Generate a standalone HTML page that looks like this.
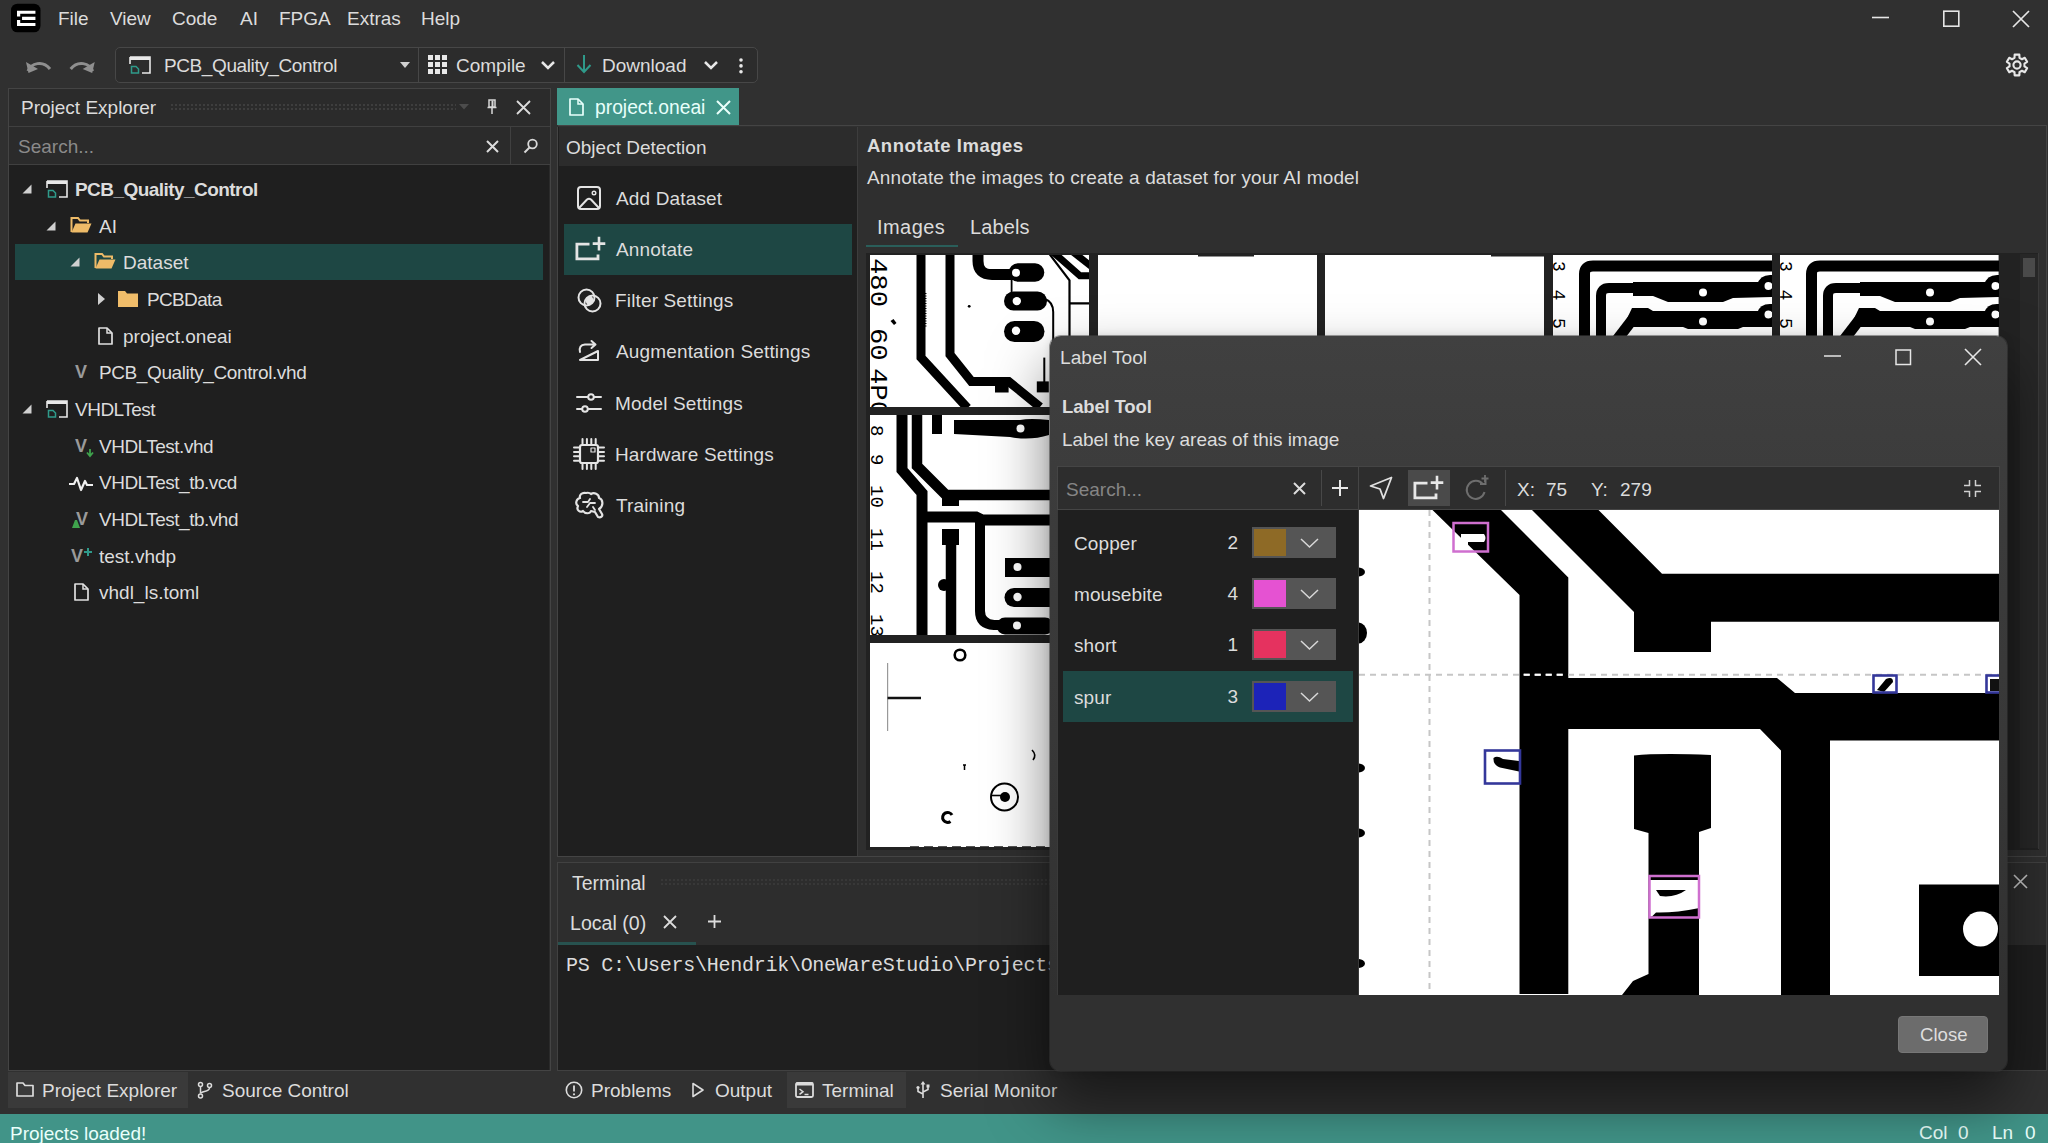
<!DOCTYPE html><html><head><meta charset='utf-8'><title>OneWare Studio</title><style>
*{box-sizing:border-box;margin:0;padding:0}
html,body{width:2048px;height:1143px;overflow:hidden;background:#303030}
body{font-family:"Liberation Sans",sans-serif;font-size:19px;color:#dcdcdc;position:relative}
.a{position:absolute}
.t{position:absolute;white-space:pre;line-height:24px;height:24px}
.b{font-weight:700}
svg{position:absolute;overflow:visible}
.mono{font-family:"Liberation Mono",monospace}
</style></head><body>
<svg style='left:11px;top:3px;' width='29.5' height='30' viewBox='0 0 32 31'><rect x='0' y='0' width='32' height='31' rx='7' fill='#000'/><path d='M6.5 7.5H26.5V11H10V14H6.5Z M12 14.2H26.5V17.6H12Z M6.5 17.8H10V20.8H26.5V24.3H6.5Z' fill='#fff'/></svg>
<div class='t ' style='left:58px;top:6.800000000000001px;'>File</div>
<div class='t ' style='left:110px;top:6.800000000000001px;'>View</div>
<div class='t ' style='left:172px;top:6.800000000000001px;'>Code</div>
<div class='t ' style='left:240px;top:6.800000000000001px;'>AI</div>
<div class='t ' style='left:279px;top:6.800000000000001px;'>FPGA</div>
<div class='t ' style='left:347px;top:6.800000000000001px;'>Extras</div>
<div class='t ' style='left:421px;top:6.800000000000001px;'>Help</div>
<svg style='left:1872px;top:10px;' width='160' height='20' viewBox='0 0 160 20'><path d='M0 7.5H17' stroke='#e6e6e6' stroke-width='1.6'/><rect x='71.8' y='1.2' width='15' height='15' fill='none' stroke='#e6e6e6' stroke-width='1.6'/><path d='M141 1L157 17M157 1L141 17' stroke='#e6e6e6' stroke-width='1.7'/></svg>
<svg style='left:25.3px;top:54px;' width='80' height='22' viewBox='0 0 80 22'><path d='M3 17C6 9 18 6 25 15' fill='none' stroke='#8f8f8f' stroke-width='3'/><path d='M1 8L3.5 19L13 15Z' fill='#8f8f8f'/><g transform='translate(-3.3 0)'><path d='M71 17C68 9 56 6 49 15' fill='none' stroke='#8f8f8f' stroke-width='3'/><path d='M73 8L70.5 19L61 15Z' fill='#8f8f8f'/></g></svg>
<div class='a' style='left:115px;top:47px;width:643px;height:36px;border:1px solid #474747;border-radius:5px;background:#2c2c2c'></div>
<div class='a' style='left:418px;top:48px;width:1px;height:34px;background:#474747;'></div>
<div class='a' style='left:564px;top:48px;width:1px;height:34px;background:#474747;'></div>
<svg style='left:129px;top:56px;' width='22' height='18' viewBox='0 0 22 18'><path d='M1 1H21V17H13' fill='none' stroke='#e8e8e8' stroke-width='1.6'/><path d='M1 1H21V4H1Z' fill='#e8e8e8'/><path d='M1 1V8' stroke='#e8e8e8' stroke-width='1.6'/><path d='M2.5 10.5H7L9.5 13V17H2.5Z' fill='none' stroke='#2f9a8a' stroke-width='1.5'/></svg>
<div class='t ' style='left:164px;top:53.5px;letter-spacing:-0.4px'>PCB_Quality_Control</div>
<svg style='left:399.5px;top:61.8px;' width='10' height='6' viewBox='0 0 10 6'><path d='M0 0H10L5 6Z' fill='#d0d0d0'/></svg>
<svg style='left:428px;top:55px;' width='19' height='19' viewBox='0 0 19 19'><rect x='0' y='0' width='5' height='5' fill='#e8e8e8'/><rect x='0' y='7' width='5' height='5' fill='#e8e8e8'/><rect x='0' y='14' width='5' height='5' fill='#e8e8e8'/><rect x='7' y='0' width='5' height='5' fill='#e8e8e8'/><rect x='7' y='7' width='5' height='5' fill='#e8e8e8'/><rect x='7' y='14' width='5' height='5' fill='#e8e8e8'/><rect x='14' y='0' width='5' height='5' fill='#e8e8e8'/><rect x='14' y='7' width='5' height='5' fill='#e8e8e8'/><rect x='14' y='14' width='5' height='5' fill='#e8e8e8'/></svg>
<div class='t ' style='left:456px;top:53.5px;'>Compile</div>
<svg style='left:541px;top:61.3px;' width='14' height='9' viewBox='0 0 14 9'><path d='M1 1L7 7L13 1' fill='none' stroke='#e8e8e8' stroke-width='2.5'/></svg>
<svg style='left:576px;top:55px;' width='16' height='20' viewBox='0 0 16 20'><path d='M8 0V16M1.5 10L8 17L14.5 10' fill='none' stroke='#2f9a8a' stroke-width='2'/></svg>
<div class='t ' style='left:602px;top:53.5px;'>Download</div>
<svg style='left:704px;top:61.3px;' width='14' height='9' viewBox='0 0 14 9'><path d='M1 1L7 7L13 1' fill='none' stroke='#e8e8e8' stroke-width='2.5'/></svg>
<svg style='left:739.3px;top:57.5px;' width='4' height='16' viewBox='0 0 4 16'><circle cx='2' cy='2' r='1.8' fill='#e8e8e8'/><circle cx='2' cy='7.9' r='1.8' fill='#e8e8e8'/><circle cx='2' cy='13.8' r='1.8' fill='#e8e8e8'/></svg>
<svg style='left:2004.5px;top:52.8px;' width='24' height='24' viewBox='0 0 24 24'><g transform='translate(12 12)' fill='none' stroke='#e8e8e8' stroke-width='2.1' stroke-linejoin='round'><circle r='3.6'/><path d='M-2.38 -10.33L2.38 -10.33L2.47 -7.19L4.99 -5.74L7.75 -7.23L10.14 -3.10L7.46 -1.45L7.46 1.45L10.14 3.10L7.75 7.23L4.99 5.74L2.47 7.19L2.38 10.33L-2.38 10.33L-2.47 7.19L-4.99 5.74L-7.75 7.23L-10.14 3.10L-7.46 1.45L-7.46 -1.45L-10.14 -3.10L-7.75 -7.23L-4.99 -5.74L-2.47 -7.19Z'/></g></svg>
<div class='a' style='left:8px;top:88px;width:543px;height:983px;background:#2b2b2b;border:1px solid #444'></div>
<div class='t ' style='left:21px;top:95.5px;'>Project Explorer</div>
<div class='a' style='left:170px;top:103px;width:286px;height:8px;opacity:.4;background-image:radial-gradient(circle,#5a5a5a 0.9px,transparent 1.2px);background-size:4px 4px'></div>
<svg style='left:458.5px;top:104px;' width='10' height='6' viewBox='0 0 10 6'><path d='M0 0H10L5 5.5Z' fill='#4c4c4c'/></svg>
<svg style='left:487px;top:99px;' width='10' height='16' viewBox='0 0 10 16'><path d='M2 1H8V8H2ZM0.5 8.5H9.5M5 9V15' fill='none' stroke='#d8d8d8' stroke-width='1.5'/><path d='M5.5 1.5V8' stroke='#d8d8d8' stroke-width='2'/></svg>
<svg style='left:516.5px;top:100.5px;' width='13.0' height='13.0' viewBox='0 0 13.0 13.0'><path d='M0 0L13.0 13.0M13.0 0L0 13.0' stroke='#dcdcdc' stroke-width='1.8' fill='none'/></svg>
<div class='a' style='left:9px;top:126px;width:541px;height:1px;background:#404040;'></div>
<div class='a' style='left:9px;top:164px;width:541px;height:1px;background:#404040;'></div>
<div class='a' style='left:510px;top:127px;width:1px;height:37px;background:#404040;'></div>
<div class='t ' style='left:18px;top:134.5px;color:#8a8a8a'>Search...</div>
<svg style='left:486.5px;top:140.5px;' width='11.0' height='11.0' viewBox='0 0 11.0 11.0'><path d='M0 0L11.0 11.0M11.0 0L0 11.0' stroke='#dcdcdc' stroke-width='2' fill='none'/></svg>
<svg style='left:523px;top:138px;' width='16' height='16' viewBox='0 0 16 16'><circle cx='9.5' cy='6' r='4.3' fill='none' stroke='#d8d8d8' stroke-width='1.8'/><path d='M6.5 9.5L1.5 14.5' stroke='#d8d8d8' stroke-width='2'/></svg>
<div class='a' style='left:9px;top:165px;width:540px;height:905px;background:#1f1f1f;'></div>
<div class='a' style='left:15px;top:244px;width:528px;height:36px;background:#1e4744;'></div>
<svg style='left:22px;top:184px;' width='10' height='10' viewBox='0 0 10 10'><path d='M9.5 0.5V9.5H0.5Z' fill='#d0d0d0'/></svg>
<svg style='left:46px;top:180px;' width='22' height='18' viewBox='0 0 22 18'><path d='M1 1H21V17H13' fill='none' stroke='#e8e8e8' stroke-width='1.6'/><path d='M1 1H21V4H1Z' fill='#e8e8e8'/><path d='M1 1V8' stroke='#e8e8e8' stroke-width='1.6'/><path d='M2.5 10.5H7L9.5 13V17H2.5Z' fill='none' stroke='#2f9a8a' stroke-width='1.5'/></svg>
<div class='t b' style='left:75px;top:177.5px;letter-spacing:-0.55px'>PCB_Quality_Control</div>
<svg style='left:46px;top:221px;' width='10' height='10' viewBox='0 0 10 10'><path d='M9.5 0.5V9.5H0.5Z' fill='#d0d0d0'/></svg>
<svg style='left:70px;top:216px;' width='22' height='18' viewBox='0 0 22 18'><path d='M1.5 16V2H8L10 4.5H18V7' fill='none' stroke='#eebb68' stroke-width='2'/><path d='M1.5 16.5L5.5 7.5H21.5L17.5 16.5Z' fill='#eebb68'/></svg>
<div class='t ' style='left:99px;top:214.5px;'>AI</div>
<svg style='left:70px;top:257px;' width='10' height='10' viewBox='0 0 10 10'><path d='M9.5 0.5V9.5H0.5Z' fill='#d0d0d0'/></svg>
<svg style='left:94px;top:252px;' width='22' height='18' viewBox='0 0 22 18'><path d='M1.5 16V2H8L10 4.5H18V7' fill='none' stroke='#eebb68' stroke-width='2'/><path d='M1.5 16.5L5.5 7.5H21.5L17.5 16.5Z' fill='#eebb68'/></svg>
<div class='t ' style='left:123px;top:250.5px;'>Dataset</div>
<svg style='left:98px;top:293px;' width='8' height='12' viewBox='0 0 8 12'><path d='M0 0L7 6L0 12Z' fill='#d0d0d0'/></svg>
<svg style='left:118px;top:290px;' width='20' height='17' viewBox='0 0 20 17'><path d='M0 1H7L9 3.5H20V17H0Z' fill='#f0bd6a'/></svg>
<div class='t ' style='left:147px;top:287.5px;letter-spacing:-0.65px'>PCBData</div>
<svg style='left:98px;top:327px;' width='15' height='18' viewBox='0 0 15 18'><path d='M1 1H9L14 6V17H1Z' fill='none' stroke='#e0e0e0' stroke-width='1.7' stroke-linejoin='round'/><path d='M9 1V6H14' fill='none' stroke='#e0e0e0' stroke-width='1.5'/></svg>
<div class='t ' style='left:123px;top:324.5px;'>project.oneai</div>
<div class='t b' style='left:75px;top:360px;color:#9a9a9a;font-size:18px'>V</div>
<div class='t ' style='left:99px;top:360.5px;letter-spacing:-0.4px'>PCB_Quality_Control.vhd</div>
<svg style='left:22px;top:404px;' width='10' height='10' viewBox='0 0 10 10'><path d='M9.5 0.5V9.5H0.5Z' fill='#d0d0d0'/></svg>
<svg style='left:46px;top:400px;' width='22' height='18' viewBox='0 0 22 18'><path d='M1 1H21V17H13' fill='none' stroke='#e8e8e8' stroke-width='1.6'/><path d='M1 1H21V4H1Z' fill='#e8e8e8'/><path d='M1 1V8' stroke='#e8e8e8' stroke-width='1.6'/><path d='M2.5 10.5H7L9.5 13V17H2.5Z' fill='none' stroke='#2f9a8a' stroke-width='1.5'/></svg>
<div class='t ' style='left:75px;top:397.5px;letter-spacing:-0.5px'>VHDLTest</div>
<div class='t b' style='left:75px;top:434px;color:#9a9a9a;font-size:18px'>V</div>
<svg style='left:86px;top:449px;' width='8' height='8' viewBox='0 0 8 8'><path d='M4 0V6M1 3.5L4 7L7 3.5' stroke='#3fa34d' stroke-width='1.8' fill='none'/></svg>
<div class='t ' style='left:99px;top:434.5px;letter-spacing:-0.5px'>VHDLTest.vhd</div>
<svg style='left:68px;top:474px;' width='26' height='18' viewBox='0 0 26 18'><path d='M1 10H6L9 4L13 16L17 7L19 11H25' fill='none' stroke='#f0f0f0' stroke-width='2.2' stroke-linejoin='round'/></svg>
<div class='t ' style='left:99px;top:470.5px;letter-spacing:-0.5px'>VHDLTest_tb.vcd</div>
<div class='t b' style='left:76px;top:507px;color:#9a9a9a;font-size:18px'>V</div>
<svg style='left:70px;top:519px;' width='12' height='10' viewBox='0 0 12 10'><path d='M2 9L5 1H7L10 9Z' fill='#3fa34d'/></svg>
<div class='t ' style='left:99px;top:507.5px;letter-spacing:-0.5px'>VHDLTest_tb.vhd</div>
<div class='t b' style='left:71px;top:544px;color:#9a9a9a;font-size:18px'>V</div>
<svg style='left:84px;top:548px;' width='8' height='8' viewBox='0 0 8 8'><path d='M4 0V8M0 4H8' stroke='#2f9a8a' stroke-width='2'/></svg>
<div class='t ' style='left:99px;top:544.5px;'>test.vhdp</div>
<svg style='left:74px;top:583px;' width='15' height='18' viewBox='0 0 15 18'><path d='M1 1H9L14 6V17H1Z' fill='none' stroke='#e0e0e0' stroke-width='1.7' stroke-linejoin='round'/><path d='M9 1V6H14' fill='none' stroke='#e0e0e0' stroke-width='1.5'/></svg>
<div class='t ' style='left:99px;top:580.5px;'>vhdl_ls.toml</div>
<div class='a' style='left:8px;top:1072px;width:180px;height:36px;background:#3a3a3a;'></div>
<svg style='left:16px;top:1081px;' width='18' height='16' viewBox='0 0 18 16'><path d='M1 2H7L9 4.5H17V15H1Z' fill='none' stroke='#dcdcdc' stroke-width='1.7' stroke-linejoin='round'/></svg>
<div class='t ' style='left:42px;top:1078.5px;'>Project Explorer</div>
<svg style='left:197px;top:1081px;' width='16' height='19' viewBox='0 0 16 19'><circle cx='3.5' cy='3.5' r='2' fill='none' stroke='#dcdcdc' stroke-width='1.5'/><circle cx='3.5' cy='15' r='2' fill='none' stroke='#dcdcdc' stroke-width='1.5'/><circle cx='12.5' cy='4.5' r='2' fill='none' stroke='#dcdcdc' stroke-width='1.5'/><path d='M3.5 6V12.5M12.5 7C12.5 11 4 10 3.7 12.5' fill='none' stroke='#dcdcdc' stroke-width='1.5'/></svg>
<div class='t ' style='left:222px;top:1078.5px;'>Source Control</div>
<div class='a' style='left:0px;top:1114px;width:2048px;height:29px;background:#419488;'></div>
<div class='t ' style='left:10px;top:1121.5px;color:#e9fffb'>Projects loaded!</div>
<div class='t ' style='left:1919px;top:1120.5px;color:#e9fffb'>Col</div>
<div class='t ' style='left:1958px;top:1120.5px;color:#e9fffb'>0</div>
<div class='t ' style='left:1992px;top:1120.5px;color:#e9fffb'>Ln</div>
<div class='t ' style='left:2025px;top:1120.5px;color:#e9fffb'>0</div>
<div class='a' style='left:557px;top:87.6px;width:182px;height:37.4px;background:#419689;'></div>
<svg style='left:569px;top:98px;' width='15' height='18' viewBox='0 0 15 18'><path d='M1 1H9L14 6V17H1Z' fill='none' stroke='#e8fffb' stroke-width='1.7' stroke-linejoin='round'/><path d='M9 1V6H14' fill='none' stroke='#e8fffb' stroke-width='1.5'/></svg>
<div class='t ' style='left:595px;top:95.5px;color:#e8fffb;font-size:19.3px'>project.oneai</div>
<svg style='left:716.5px;top:100.5px;' width='13.0' height='13.0' viewBox='0 0 13.0 13.0'><path d='M0 0L13.0 13.0M13.0 0L0 13.0' stroke='#eafffb' stroke-width='2' fill='none'/></svg>
<div class='a' style='left:558px;top:125px;width:1489px;height:1px;background:#444;'></div>
<div class='a' style='left:557px;top:127px;width:301px;height:729.5px;background:#1f1f1f;border-left:1px solid #444;border-bottom:1px solid #444'></div>
<div class='a' style='left:559px;top:127px;width:298px;height:39px;background:#2c2c2c;'></div>
<div class='t ' style='left:566px;top:135.5px;'>Object Detection</div>
<div class='a' style='left:857px;top:127px;width:1px;height:729px;background:#3d3d3d;'></div>
<div class='a' style='left:564px;top:224px;width:288px;height:51px;background:#1e4744;'></div>
<div class='t ' style='left:616px;top:186.5px;letter-spacing:0.15px'>Add Dataset</div>
<div class='t ' style='left:616px;top:237.5px;letter-spacing:0.15px'>Annotate</div>
<div class='t ' style='left:615px;top:288.5px;letter-spacing:0.15px'>Filter Settings</div>
<div class='t ' style='left:616px;top:339.5px;letter-spacing:0.15px'>Augmentation Settings</div>
<div class='t ' style='left:615px;top:391.5px;letter-spacing:0.15px'>Model Settings</div>
<div class='t ' style='left:615px;top:442.5px;letter-spacing:0.15px'>Hardware Settings</div>
<div class='t ' style='left:616px;top:493.5px;letter-spacing:0.15px'>Training</div>
<svg style='left:577px;top:186px;' width='24' height='24' viewBox='0 0 24 24'><g stroke-width='2'><rect x='1' y='1' width='22' height='22' rx='3' fill='none' stroke='#e4e4e4' stroke-linejoin='round' stroke-linecap='round'/><circle cx='17' cy='7' r='1.8' fill='none' stroke='#e4e4e4' stroke-linejoin='round' stroke-linecap='round' stroke-width='1.4'/><path d='M2.5 21.5L10 13.5Q12 12 14 13.5L21.5 21.5' fill='none' stroke='#e4e4e4' stroke-linejoin='round' stroke-linecap='round'/></g></svg>
<svg style='left:574px;top:236px;' width='32' height='28' viewBox='0 0 32 28'><path d='M15.5 8.2H2.9V22.8H24V18.5' fill='none' stroke='#e4e4e4' stroke-width='2.8'/><path d='M25 0.8V14.4M18.7 7.6H31.3' fill='none' stroke='#e4e4e4' stroke-width='2.6'/></svg>
<svg style='left:577px;top:288px;' width='26' height='26' viewBox='0 0 26 26'><g stroke-width='2'><circle cx='9.5' cy='9.5' r='8' fill='none' stroke='#e4e4e4' stroke-linejoin='round' stroke-linecap='round'/><circle cx='15.5' cy='15.5' r='8' fill='none' stroke='#e4e4e4' stroke-linejoin='round' stroke-linecap='round'/><path d='M8.5 13A8 8 0 0 1 14 7.6A8 8 0 0 1 16.5 12A8 8 0 0 1 11 17.4A8 8 0 0 1 8.5 13Z' fill='#e4e4e4'/></g></svg>
<svg style='left:577px;top:339px;' width='24' height='24' viewBox='0 0 24 24'><g stroke-width='2'><path d='M3 21L21 12V21Z' fill='none' stroke='#e4e4e4' stroke-linejoin='round' stroke-linecap='round'/><path d='M3 13Q1.5 6 8 5.5H18M14.5 2L18.5 5.5L14.5 9' fill='none' stroke='#e4e4e4' stroke-linejoin='round' stroke-linecap='round'/></g></svg>
<svg style='left:576px;top:391px;' width='26' height='24' viewBox='0 0 26 24'><g stroke-width='2'><path d='M1 6H12M18 6H25M1 18H6M12 18H25' fill='none' stroke='#e4e4e4' stroke-linejoin='round' stroke-linecap='round'/><circle cx='15' cy='6' r='2.8' fill='none' stroke='#e4e4e4' stroke-linejoin='round' stroke-linecap='round'/><circle cx='9' cy='18' r='2.8' fill='none' stroke='#e4e4e4' stroke-linejoin='round' stroke-linecap='round'/></g></svg>
<svg style='left:573px;top:438px;' width='32' height='32' viewBox='0 0 32 32'><g stroke-width='2'><rect x='7' y='7' width='18' height='18' rx='2' fill='none' stroke='#e4e4e4' stroke-linejoin='round' stroke-linecap='round' stroke-width='2.2'/><rect x='18' y='10' width='4' height='4' fill='none' stroke='#e4e4e4' stroke-linejoin='round' stroke-linecap='round' stroke-width='1.2'/><path d='M9.5 1V6M9.5 26V31M1 9.5H6M26 9.5H31' fill='none' stroke='#e4e4e4' stroke-linejoin='round' stroke-linecap='round' stroke-width='2'/><path d='M13.9 1V6M13.9 26V31M1 13.9H6M26 13.9H31' fill='none' stroke='#e4e4e4' stroke-linejoin='round' stroke-linecap='round' stroke-width='2'/><path d='M18.3 1V6M18.3 26V31M1 18.3H6M26 18.3H31' fill='none' stroke='#e4e4e4' stroke-linejoin='round' stroke-linecap='round' stroke-width='2'/><path d='M22.700000000000003 1V6M22.700000000000003 26V31M1 22.700000000000003H6M26 22.700000000000003H31' fill='none' stroke='#e4e4e4' stroke-linejoin='round' stroke-linecap='round' stroke-width='2'/></g></svg>
<svg style='left:574px;top:490px;' width='32' height='32' viewBox='0 0 32 32'><g stroke-width='2'><path d='M12 3C8 2 5 5 6 8C2 9 1 14 4 16C2 20 6 23 9 21C11 24 16 24 17 21L21 22L24 27C27 28 29 26 28 24L25 19C30 16 29 9 25 8C25 4 20 2 17 4C16 3 14 2.5 12 3Z' fill='none' stroke='#e4e4e4' stroke-linejoin='round' stroke-linecap='round' stroke-width='2.2'/><path d='M9 12H14L16 9M13 17L16 13H21M19 17L21 20' fill='none' stroke='#e4e4e4' stroke-linejoin='round' stroke-linecap='round' stroke-width='1.8'/></g></svg>
<div class='a' style='left:858px;top:126px;width:1189px;height:730.5px;background:#2f2f2f;border-bottom:1px solid #444'></div>
<div class='a' style='left:2046px;top:126px;width:1px;height:730px;background:#444;'></div>
<div class='t b' style='left:867px;top:133.5px;font-size:18.5px;letter-spacing:0.5px'>Annotate Images</div>
<div class='t ' style='left:867px;top:165.5px;letter-spacing:0.11px'>Annotate the images to create a dataset for your AI model</div>
<div class='t ' style='left:877px;top:214.5px;font-size:20px;letter-spacing:0.45px'>Images</div>
<div class='t ' style='left:970px;top:214.5px;font-size:20px;letter-spacing:0.1px'>Labels</div>
<div class='a' style='left:866px;top:244.5px;width:92px;height:2.5px;background:#2a5e5a;'></div>
<div class='a' style='left:557px;top:862px;width:1490px;height:209px;background:#2d2d2d;border:1px solid #414141'></div>
<div class='t ' style='left:572px;top:870.5px;font-size:19.5px'>Terminal</div>
<div class='a' style='left:660px;top:878px;width:1340px;height:8px;opacity:.25;background-image:radial-gradient(circle,#5a5a5a 0.9px,transparent 1.2px);background-size:4px 4px'></div>
<svg style='left:2013.5px;top:874.5px;' width='13.0' height='13.0' viewBox='0 0 13.0 13.0'><path d='M0 0L13.0 13.0M13.0 0L0 13.0' stroke='#c8c8c8' stroke-width='1.6' fill='none'/></svg>
<div class='t ' style='left:570px;top:910.5px;font-size:19.6px'>Local (0)</div>
<svg style='left:664px;top:916px;' width='12' height='12' viewBox='0 0 12 12'><path d='M0 0L12 12M12 0L0 12' stroke='#dcdcdc' stroke-width='1.8' fill='none'/></svg>
<svg style='left:708px;top:915px;' width='13' height='13' viewBox='0 0 13 13'><path d='M6.5 0V13M0 6.5H13' stroke='#dcdcdc' stroke-width='1.8'/></svg>
<div class='a' style='left:558px;top:942px;width:138px;height:3px;background:#27524f;'></div>
<div class='a' style='left:558px;top:945px;width:1488px;height:125px;background:#1f1f1f;'></div>
<div class='t mono' style='left:566px;top:953.5px;font-size:20px;letter-spacing:-0.27px'>PS C:\Users\Hendrik\OneWareStudio\Projects</div>
<div class='a' style='left:787px;top:1072px;width:119px;height:36px;background:#3a3a3a;'></div>
<svg style='left:565px;top:1081px;' width='18' height='18' viewBox='0 0 18 18'><circle cx='9' cy='9' r='7.7' fill='none' stroke='#dcdcdc' stroke-width='1.6'/><path d='M9 4.5V10.5' stroke='#dcdcdc' stroke-width='1.8'/><circle cx='9' cy='13.3' r='1.1' fill='#dcdcdc'/></svg>
<div class='t ' style='left:591px;top:1078.5px;'>Problems</div>
<svg style='left:692px;top:1082px;' width='12' height='16' viewBox='0 0 12 16'><path d='M1 1.5L11 8L1 14.5Z' fill='none' stroke='#dcdcdc' stroke-width='1.6' stroke-linejoin='round'/></svg>
<div class='t ' style='left:715px;top:1078.5px;'>Output</div>
<svg style='left:795px;top:1082px;' width='19' height='16' viewBox='0 0 19 16'><rect x='1' y='1' width='17' height='14' rx='1.5' fill='none' stroke='#dcdcdc' stroke-width='1.8'/><path d='M1 2H18' stroke='#dcdcdc' stroke-width='3'/><path d='M4.5 7L8 9.7L4.5 12.3M9.5 12.5H13.5' fill='none' stroke='#dcdcdc' stroke-width='1.5'/></svg>
<div class='t ' style='left:822px;top:1078.5px;'>Terminal</div>
<svg style='left:915px;top:1081px;' width='16' height='18' viewBox='0 0 16 18'><path d='M8 2V17M8 13L3 10.5V7.5M8 11L13 8.5V6' fill='none' stroke='#dcdcdc' stroke-width='1.6'/><path d='M8 0L10.5 3.5H5.5Z' fill='#dcdcdc'/><circle cx='3' cy='6.5' r='1.6' fill='#dcdcdc'/><rect x='11.5' y='3.5' width='3' height='3' fill='#dcdcdc'/></svg>
<div class='t ' style='left:940px;top:1078.5px;'>Serial Monitor</div>
<div class='a' style='left:866px;top:253px;width:1173px;height:597px;background:#222;'></div>
<div class='a' style='left:2038px;top:253px;width:1px;height:596px;background:#3a3a3a;'></div>
<div class='a' style='left:2020px;top:254px;width:18px;height:594px;background:#272727;'></div>
<div class='a' style='left:2022.5px;top:258px;width:12.5px;height:19px;background:#4a4a4a;'></div>
<svg style='left:870px;top:254.5px;overflow:hidden' width='219' height='152.5' viewBox='0 0 219 152.5'><rect width='219' height='152.5' fill='#fff'/><text transform='translate(0.5 3) rotate(90) scale(1.16 1)' font-family='Liberation Mono, monospace' font-size='23.5' fill='#000' >480</text><text transform='translate(0.5 73) rotate(90) scale(1.16 1)' font-family='Liberation Mono, monospace' font-size='23.5' fill='#000' >60</text><text transform='translate(0.5 113) rotate(90) scale(1.16 1)' font-family='Liberation Mono, monospace' font-size='23.5' fill='#000' >4P0</text><path d='M51 -2V102.6L97.5 153' fill='none' stroke='#000' stroke-width='9'/><path d='M80 -2V99.6L101.4 126.4H138.6L170 152' fill='none' stroke='#000' stroke-width='9'/><rect x='125' y='128' width='13.6' height='9.5' fill='#000'/><path d='M108 -2V6Q108 19.5 122 19.5H160' fill='none' stroke='#000' stroke-width='11'/><path d='M148 17.5H165' fill='none' stroke='#000' stroke-width='18.6' stroke-linecap='round'/><circle cx='146' cy='17.8' r='4' fill='#fff'/><path d='M143.5 46H167.5' fill='none' stroke='#000' stroke-width='19' stroke-linecap='round'/><circle cx='146.8' cy='46.1' r='4.2' fill='#fff'/><path d='M144.5 76.5H164' fill='none' stroke='#000' stroke-width='21' stroke-linecap='round'/><circle cx='146' cy='75.8' r='4.2' fill='#fff'/><path d='M141.6 25V38' fill='none' stroke='#000' stroke-width='1.8'/><path d='M175 44Q183.2 47 183.2 57V96' fill='none' stroke='#000' stroke-width='2'/><path d='M174.3 102.6V127' fill='none' stroke='#000' stroke-width='2'/><rect x='166.8' y='126.4' width='12' height='11' fill='#000'/><path d='M178.7 -2L199.5 25.3V86M199.5 48.3H219' fill='none' stroke='#000' stroke-width='2.2'/><path d='M183 -3L210 20.8H222' fill='none' stroke='#000' stroke-width='7'/><path d='M203 -3L222 12' fill='none' stroke='#000' stroke-width='7'/><path d='M20.5 66L23.5 64L26.5 68L24 70Z' fill='#000'/><circle cx='99.2' cy='51.3' r='1.4' fill='#000'/><path d='M55.5 38V72' stroke='#000' stroke-width='2' stroke-dasharray='1 1.5'/></svg>
<svg style='left:1097.6px;top:254.5px;overflow:hidden' width='219' height='152.5' viewBox='0 0 219 152.5'><rect width='219' height='152.5' fill='#fff'/><path d='M100 0.5H156' stroke='#222' stroke-width='2'/></svg>
<svg style='left:1325.2px;top:254.5px;overflow:hidden' width='219' height='152.5' viewBox='0 0 219 152.5'><rect width='219' height='152.5' fill='#fff'/><path d='M166 0.5H219' stroke='#222' stroke-width='2'/></svg>
<svg style='left:1552.8px;top:254.5px;overflow:hidden' width='219' height='152.5' viewBox='0 0 219 152.5'><rect width='219' height='152.5' fill='#fff'/><text transform='translate(0 6) rotate(90) scale(1 1)' font-family='Liberation Mono, monospace' font-size='18' fill='#000' >3</text><text transform='translate(0 34.5) rotate(90) scale(1 1)' font-family='Liberation Mono, monospace' font-size='18' fill='#000' >4</text><text transform='translate(0 63) rotate(90) scale(1 1)' font-family='Liberation Mono, monospace' font-size='18' fill='#000' >5</text><path d='M31.5 90V19Q31.5 11 40 11H222' fill='none' stroke='#000' stroke-width='11'/><path d='M48 90V41Q48 33 56 33H90' fill='none' stroke='#000' stroke-width='10'/><path d='M80 27H219V42L180 43L170 47H115L100 41H80Z' fill='#000'/><path d='M204 30Q207 19 219 20V40H204Z' fill='#000'/><circle cx='150' cy='37.5' r='4' fill='#fff'/><circle cx='215.5' cy='31' r='4' fill='#fff'/><path d='M60 90L83 60' fill='none' stroke='#000' stroke-width='11'/><path d='M79 53H95L100 56H219V72H190L185 74H135L130 72H70Z' fill='#000'/><path d='M204 58Q207 48 219 49V68H204Z' fill='#000'/><circle cx='150' cy='66.5' r='4' fill='#fff'/><circle cx='215.5' cy='59.5' r='4' fill='#fff'/></svg>
<svg style='left:1780.4px;top:254.5px;overflow:hidden' width='218.6' height='152.5' viewBox='0 0 218.6 152.5'><rect width='218.6' height='152.5' fill='#fff'/><text transform='translate(0 6) rotate(90) scale(1 1)' font-family='Liberation Mono, monospace' font-size='18' fill='#000' >3</text><text transform='translate(0 34.5) rotate(90) scale(1 1)' font-family='Liberation Mono, monospace' font-size='18' fill='#000' >4</text><text transform='translate(0 63) rotate(90) scale(1 1)' font-family='Liberation Mono, monospace' font-size='18' fill='#000' >5</text><path d='M31.5 90V19Q31.5 11 40 11H222' fill='none' stroke='#000' stroke-width='11'/><path d='M48 90V41Q48 33 56 33H90' fill='none' stroke='#000' stroke-width='10'/><path d='M80 27H219V42L180 43L170 47H115L100 41H80Z' fill='#000'/><path d='M204 30Q207 19 219 20V40H204Z' fill='#000'/><circle cx='150' cy='37.5' r='4' fill='#fff'/><circle cx='215.5' cy='31' r='4' fill='#fff'/><path d='M60 90L83 60' fill='none' stroke='#000' stroke-width='11'/><path d='M79 53H95L100 56H219V72H190L185 74H135L130 72H70Z' fill='#000'/><path d='M204 58Q207 48 219 49V68H204Z' fill='#000'/><circle cx='150' cy='66.5' r='4' fill='#fff'/><circle cx='215.5' cy='59.5' r='4' fill='#fff'/></svg>
<svg style='left:870px;top:415px;overflow:hidden' width='219' height='220' viewBox='0 0 219 220'><rect width='219' height='220' fill='#fff'/><text transform='translate(1 10) rotate(90) scale(1 1)' font-family='Liberation Mono, monospace' font-size='19' fill='#000' >8</text><text transform='translate(1 39) rotate(90) scale(1 1)' font-family='Liberation Mono, monospace' font-size='19' fill='#000' >9</text><text transform='translate(1 70) rotate(90) scale(1 1)' font-family='Liberation Mono, monospace' font-size='19' fill='#000' >10</text><text transform='translate(1 113) rotate(90) scale(1 1)' font-family='Liberation Mono, monospace' font-size='19' fill='#000' >11</text><text transform='translate(1 156) rotate(90) scale(1 1)' font-family='Liberation Mono, monospace' font-size='19' fill='#000' >12</text><text transform='translate(1 199) rotate(90) scale(1 1)' font-family='Liberation Mono, monospace' font-size='19' fill='#000' >13</text><path d='M32 -2V55L52 78V222' fill='none' stroke='#000' stroke-width='11'/><path d='M47 -2V51L76 80H222' fill='none' stroke='#000' stroke-width='10.5'/><rect x='72' y='80' width='17' height='11' fill='#000'/><rect x='62' y='0' width='10' height='19' fill='#000'/><path d='M84 5H150Q160 3 179 5V20Q160 26 140 22L84 19Z' fill='#000'/><circle cx='150.5' cy='13.5' r='4' fill='#fff'/><path d='M52 102H106L112 105H222' fill='none' stroke='#000' stroke-width='11'/><path d='M110 105V196Q110 209 124 210H222' fill='none' stroke='#000' stroke-width='10'/><path d='M135 211H175' fill='none' stroke='#000' stroke-width='17' stroke-linecap='round'/><circle cx='147' cy='210.5' r='4' fill='#fff'/><rect x='72' y='114' width='17' height='16' fill='#000'/><path d='M81 128V222' fill='none' stroke='#000' stroke-width='10.5'/><circle cx='74' cy='170' r='6' fill='#000'/><rect x='135' y='143' width='60' height='19' fill='#000'/><circle cx='147.5' cy='152' r='4' fill='#fff'/><path d='M144 182.5H190' fill='none' stroke='#000' stroke-width='19' stroke-linecap='round'/><circle cx='147.5' cy='182' r='4.2' fill='#fff'/></svg>
<svg style='left:870px;top:643px;overflow:hidden' width='219' height='204' viewBox='0 0 219 204'><rect width='219' height='204' fill='#fff'/><circle cx='90' cy='12' r='5.3' fill='none' stroke='#000' stroke-width='2.6'/><path d='M17.6 20V88' stroke='#999' stroke-width='1.2'/><path d='M17.6 55H51' stroke='#111' stroke-width='2.4'/><path d='M93 122H96M94.5 122V127' stroke='#000' stroke-width='1.5'/><path d='M162 107Q167 112 163 117' fill='none' stroke='#000' stroke-width='1.6'/><circle cx='134.5' cy='154' r='13.5' fill='none' stroke='#000' stroke-width='2'/><circle cx='135' cy='154' r='5' fill='#000'/><path d='M121 152.5H135' fill='none' stroke='#000' stroke-width='1.6'/><path d='M80.5 178.5A5 5 0 1 1 82 172' fill='none' stroke='#000' stroke-width='3'/><path d='M40 203.5H219' stroke='#555' stroke-width='1' stroke-dasharray='9 5'/></svg>
<div class='a' style='left:1050px;top:336px;width:957px;height:734.5px;border-radius:11px;background:linear-gradient(#404040 0px,#3c3c3c 130px,#383838 400px,#303030 660px);box-shadow:0 30px 60px rgba(0,0,0,.52),0 0 8px rgba(0,0,0,.12),0 0 0 1px rgba(80,80,80,.5)'></div>
<div class='t ' style='left:1060px;top:346.0px;font-size:19.2px'>Label Tool</div>
<svg style='left:1824px;top:348px;' width='160' height='20' viewBox='0 0 160 20'><path d='M0 8H17' stroke='#e6e6e6' stroke-width='1.5'/><rect x='72' y='2' width='14.5' height='14.5' fill='none' stroke='#e6e6e6' stroke-width='1.5'/><path d='M141 1L157 17M157 1L141 17' stroke='#e6e6e6' stroke-width='1.6'/></svg>
<div class='t b' style='left:1062px;top:394.5px;font-size:18.5px;letter-spacing:-0.15px'>Label Tool</div>
<div class='t ' style='left:1062px;top:427.5px;letter-spacing:-0.05px'>Label the key areas of this image</div>
<div class='a' style='left:1057px;top:466px;width:943px;height:44px;background:#2d2d2d;border:1px solid #454545'></div>
<div class='a' style='left:1321px;top:470px;width:1px;height:36px;background:#484848;'></div>
<div class='a' style='left:1358px;top:467px;width:1px;height:42px;background:#454545;'></div>
<div class='a' style='left:1504.5px;top:470px;width:1px;height:36px;background:#484848;'></div>
<div class='t ' style='left:1066px;top:477.5px;color:#858585'>Search...</div>
<svg style='left:1293.5px;top:482.5px;' width='11.0' height='11.0' viewBox='0 0 11.0 11.0'><path d='M0 0L11.0 11.0M11.0 0L0 11.0' stroke='#dcdcdc' stroke-width='2' fill='none'/></svg>
<svg style='left:1332px;top:480px;' width='16' height='16' viewBox='0 0 16 16'><path d='M8 0V16M0 8H16' stroke='#e8e8e8' stroke-width='2'/></svg>
<svg style='left:1369px;top:476px;' width='24' height='24' viewBox='0 0 24 24'><path d='M22.5 1.5L1.5 10L11 13L14.5 22.5Z' fill='none' stroke='#e0e0e0' stroke-width='1.8' stroke-linejoin='round'/></svg>
<div class='a' style='left:1408px;top:470px;width:42px;height:36px;background:#4a4a4a;'></div>
<svg style='left:1412px;top:475px;' width='34' height='28' viewBox='0 0 34 28'><path d='M15.5 8.2H2.9V22.8H24V18.5' fill='none' stroke='#e8e8e8' stroke-width='2.8'/><path d='M25 0.8V14.4M18.7 7.6H31.3' fill='none' stroke='#e8e8e8' stroke-width='2.6'/></svg>
<svg style='left:1463px;top:475px;' width='28' height='26' viewBox='0 0 28 26'><path d='M20 9.5A9 9 0 1 0 21.5 17' fill='none' stroke='#6e6e6e' stroke-width='2'/><path d='M17 9H22.5V3.5' fill='none' stroke='#6e6e6e' stroke-width='2'/><path d='M22 0V7M18.5 3.5H25.5' stroke='#6e6e6e' stroke-width='1.8'/></svg>
<div class='t ' style='left:1517px;top:477.5px;'>X:</div>
<div class='t ' style='left:1546px;top:477.5px;'>75</div>
<div class='t ' style='left:1591px;top:477.5px;'>Y:</div>
<div class='t ' style='left:1620px;top:477.5px;'>279</div>
<svg style='left:1964px;top:480px;' width='17' height='17' viewBox='0 0 17 17'><path d='M5.5 0V5.5H0M11.5 0V5.5H17M5.5 17V11.5H0M11.5 17V11.5H17' fill='none' stroke='#d0d0d0' stroke-width='1.5'/></svg>
<div class='a' style='left:1057px;top:510px;width:302px;height:485px;background:#1f1f1f;border-left:1px solid #3a3a3a;border-right:1px solid #3a3a3a'></div>
<div class='a' style='left:1063px;top:671px;width:290px;height:51px;background:#1e4744;'></div>
<div class='t ' style='left:1074px;top:531.5px;letter-spacing:0.1px'>Copper</div>
<div class='t' style='left:1200px;width:38px;text-align:right;top:531px'>2</div>
<div class='a' style='left:1252px;top:527px;width:84px;height:31px;background:#555555;'></div>
<div class='a' style='left:1254px;top:529px;width:32px;height:27px;background:#8e6a26;'></div>
<svg style='left:1300px;top:538px;' width='19' height='10' viewBox='0 0 19 10'><path d='M1 1L9.5 9L18 1' fill='none' stroke='#d8d8d8' stroke-width='1.5'/></svg>
<div class='t ' style='left:1074px;top:582.5px;letter-spacing:0.1px'>mousebite</div>
<div class='t' style='left:1200px;width:38px;text-align:right;top:582px'>4</div>
<div class='a' style='left:1252px;top:578px;width:84px;height:31px;background:#555555;'></div>
<div class='a' style='left:1254px;top:580px;width:32px;height:27px;background:#e552d2;'></div>
<svg style='left:1300px;top:589px;' width='19' height='10' viewBox='0 0 19 10'><path d='M1 1L9.5 9L18 1' fill='none' stroke='#d8d8d8' stroke-width='1.5'/></svg>
<div class='t ' style='left:1074px;top:633.5px;letter-spacing:0.1px'>short</div>
<div class='t' style='left:1200px;width:38px;text-align:right;top:633px'>1</div>
<div class='a' style='left:1252px;top:629px;width:84px;height:31px;background:#555555;'></div>
<div class='a' style='left:1254px;top:631px;width:32px;height:27px;background:#e5325f;'></div>
<svg style='left:1300px;top:640px;' width='19' height='10' viewBox='0 0 19 10'><path d='M1 1L9.5 9L18 1' fill='none' stroke='#d8d8d8' stroke-width='1.5'/></svg>
<div class='t ' style='left:1074px;top:685.5px;letter-spacing:0.1px'>spur</div>
<div class='t' style='left:1200px;width:38px;text-align:right;top:685px'>3</div>
<div class='a' style='left:1252px;top:681px;width:84px;height:31px;background:#555555;'></div>
<div class='a' style='left:1254px;top:683px;width:32px;height:27px;background:#1c23b8;'></div>
<svg style='left:1300px;top:692px;' width='19' height='10' viewBox='0 0 19 10'><path d='M1 1L9.5 9L18 1' fill='none' stroke='#d8d8d8' stroke-width='1.5'/></svg>
<svg style='left:1359px;top:510px;overflow:hidden' width='640' height='484.5' viewBox='0 0 640 484.5'><rect width='640' height='485' fill='#fff'/><path d='M73.5 0.0L160.5 85.0V484H209.29999999999995V67.5L142.0 0.0Z' fill='#000'/><path d='M173.0 0.0L275.0 102.0V142H352V111.70000000000005H641V63.700000000000045H303L239.5 0.0Z' fill='#000'/><path d='M206.0 168.0H418L436.0 183.0H641V230.5H471V485H422V240.5L401.0 219.0H201Z' fill='#000'/><path d='M275.0 245.5Q301.0 243.0 352.0 245.0V318L340.0 322.0V485H263L274.0 471.0L289.5 464.0V323L275.0 319.0Z' fill='#000'/><path d='M290.5 370.0H340.5V398Q316.0 403.0 297.0 402.5L293.0 406.5H290.5Z' fill='#fff'/><path d='M297.0 380.0H327Q316.0 388.0 301.0 386.0Z' fill='#000'/><rect x='560' y='374.5' width='90' height='91.5' fill='#000'/><circle cx='621.5' cy='419' r='17.5' fill='#fff'/><ellipse cx='-1' cy='62' rx='7' ry='4.5' fill='#000'/><ellipse cx='-1' cy='123' rx='9' ry='10.5' fill='#000'/><ellipse cx='-1' cy='258' rx='7' ry='4.5' fill='#000'/><ellipse cx='-1' cy='323' rx='7' ry='4.5' fill='#000'/><ellipse cx='-1' cy='453.5' rx='7' ry='4.5' fill='#000'/><path d='M70.5 0V484' stroke='#c6c6c6' stroke-width='2' stroke-dasharray='6 5'/><path d='M0 164.70000000000005H640' stroke='#c6c6c6' stroke-width='2' stroke-dasharray='6 5'/><path d='M160 164.70000000000005H208' stroke='#fff' stroke-width='2' stroke-dasharray='6 5' stroke-dashoffset='-4.5'/><path d='M102.0 24.0H125Q128.0 28.0 125.0 32.0H109V38H102Z' fill='#fff'/><rect x='94.5' y='13' width='34.5' height='28.5' fill='none' stroke='#cf6fcf' stroke-width='2.5'/><path d='M134.5 248.0Q138.0 245.0 144.0 249.0L160.0 251.0V261.5L141.0 257.5Q134.0 255.0 134.5 248.0Z' fill='#000'/><rect x='126' y='240.5' width='35' height='33' fill='none' stroke='#34379a' stroke-width='2.6'/><path d='M518.0 180.0L527.0 169.0Q534.0 166.0 534.0 172.0L525.0 182.0Z' fill='#000'/><rect x='514.5' y='165.5' width='23' height='17' fill='none' stroke='#34379a' stroke-width='2.6'/><rect x='631' y='169' width='9' height='12' fill='#111'/><rect x='627.5' y='165.5' width='20' height='17' fill='none' stroke='#34379a' stroke-width='2.6'/><rect x='290.5' y='366' width='49.5' height='41.5' fill='none' stroke='#cf6fcf' stroke-width='2.5'/></svg>
<div class='a' style='left:1898px;top:1016px;width:90px;height:37px;background:#6c6c6c;border-radius:4px;border:1px solid #777'></div>
<div class='t ' style='left:1920px;top:1022.5px;font-size:18.6px;color:#dedede'>Close</div>
</body></html>
